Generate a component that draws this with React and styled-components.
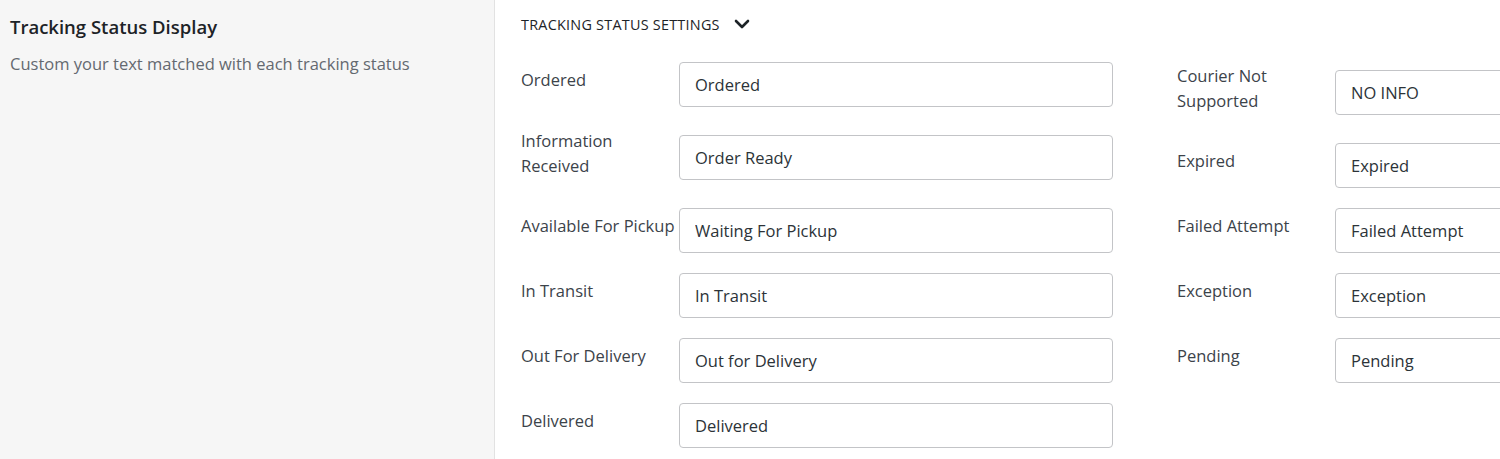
import React from 'react'
import styled, { createGlobalStyle } from 'styled-components'

const GlobalStyle = createGlobalStyle`
  html, body {
    margin: 0;
    padding: 0;
    background: #ffffff;
    overflow: hidden;
  }
  body {
    font-family: "Open Sans", "Noto Sans", sans-serif;
    color: #2c3338;
  }
`

const Page = styled.div`
  display: flex;
  width: 1500px;
  height: 459px;
  overflow: hidden;
`

const Sidebar = styled.aside`
  flex: 0 0 495px;
  background-color: #f6f6f6;
  border-right: 1px solid #e2e2e2;
  padding: 14px 10px;
  box-sizing: border-box;
`

const SideTitle = styled.h2`
  margin: 0;
  font-size: 18.5px;
  font-weight: 600;
  line-height: 26px;
  color: #1d2327;
`

const SideText = styled.p`
  margin: 12px 0 0;
  font-size: 16.5px;
  line-height: 24px;
  color: #646970;
`

const Main = styled.main`
  flex: 0 0 auto;
  padding: 13px 0 0 26px;
`

const SectionToggle = styled.button`
  display: flex;
  align-items: center;
  gap: 14px;
  padding: 0;
  border: none;
  background: none;
  font-family: inherit;
  font-size: 14.4px;
  font-weight: 500;
  letter-spacing: 0.25px;
  color: #1d2327;
  text-transform: uppercase;
  cursor: pointer;
  height: 22px;
`

const Columns = styled.div`
  display: grid;
  grid-template-columns: 592px 592px;
  column-gap: 64px;
  margin-top: 27px;
  align-items: start;
`

const Column = styled.div`
  display: flex;
  flex-direction: column;
  gap: 20px;
`

const Field = styled.div`
  display: flex;
  align-items: flex-start;
  padding-bottom: ${({ $wrap }) => ($wrap ? '8px' : '0')};
`

const Label = styled.label`
  flex: 0 0 158px;
  padding-top: ${({ $wrap }) => ($wrap ? '1px' : '5px')};
  font-size: 16.5px;
  line-height: 25px;
  color: #3c434a;
`

const Input = styled.input`
  flex: 0 0 434px;
  box-sizing: border-box;
  height: 45px;
  margin-top: ${({ $wrap }) => ($wrap ? '8px' : '0')};
  padding: 0 15px;
  border: 1px solid #c3c4c7;
  border-radius: 4px;
  background: #ffffff;
  font-family: inherit;
  font-size: 16.5px;
  color: #2c3338;
  outline: none;
`

const leftFields = [
  { label: 'Ordered', value: 'Ordered' },
  { label: 'Information Received', value: 'Order Ready', wrap: true },
  { label: 'Available For Pickup', value: 'Waiting For Pickup' },
  { label: 'In Transit', value: 'In Transit' },
  { label: 'Out For Delivery', value: 'Out for Delivery' },
  { label: 'Delivered', value: 'Delivered' },
]

const rightFields = [
  { label: 'Courier Not Supported', value: 'NO INFO', wrap: true },
  { label: 'Expired', value: 'Expired' },
  { label: 'Failed Attempt', value: 'Failed Attempt' },
  { label: 'Exception', value: 'Exception' },
  { label: 'Pending', value: 'Pending' },
]

const Chevron = () => (
  <svg width="16" height="10" viewBox="0 0 16 10" fill="none">
    <path d="M2 2l6 6 6-6" stroke="#1d2327" strokeWidth="2.6" strokeLinecap="round" strokeLinejoin="round" />
  </svg>
)

const StatusColumn = ({ fields }) => (
  <Column>
    {fields.map((f) => (
      <Field key={f.label} $wrap={f.wrap}>
        <Label $wrap={f.wrap}>{f.label}</Label>
        <Input $wrap={f.wrap} defaultValue={f.value} />
      </Field>
    ))}
  </Column>
)

export default function App() {
  return (
    <>
      <GlobalStyle />
      <Page>
        <Sidebar>
          <SideTitle>Tracking Status Display</SideTitle>
          <SideText>Custom your text matched with each tracking status</SideText>
        </Sidebar>
        <Main>
          <SectionToggle>
            Tracking Status Settings
            <Chevron />
          </SectionToggle>
          <Columns>
            <StatusColumn fields={leftFields} />
            <StatusColumn fields={rightFields} />
          </Columns>
        </Main>
      </Page>
    </>
  )
}
